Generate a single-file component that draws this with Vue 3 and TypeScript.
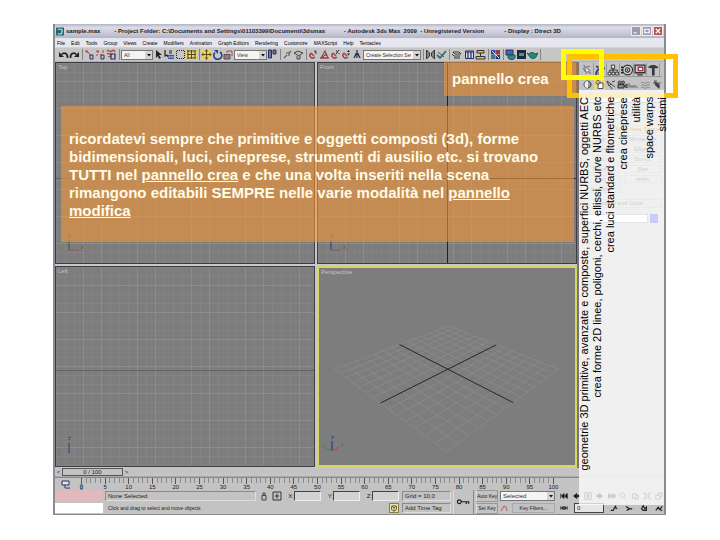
<script setup lang="ts">
interface Shape { d: string; fill?: string; stroke?: string; w?: number }
interface Tool { kind: 'btn' | 'sep' | 'gap' | 'select'; name?: string; on?: boolean; size?: string; shapes?: Shape[] }

const navy = '#26305e'
const dark = '#222'
const red = '#a8474a'

const btn = (name: string, shapes: Shape[], on = false): Tool => ({ kind: 'btn', name, shapes, on })
const sep: Tool = { kind: 'sep' }
const magnet: Shape = { d: 'M3 4C0 7 4 11 7 8M5 6l1 1M3 4l2 2', stroke: red, w: 1.6 }

const tools: Tool[] = [
  btn('Undo', [{ d: 'M9.500 9C10 4 6 3 3.500 5.500', stroke: dark, w: 1.7 }, { d: 'M1 3v5h5z', fill: dark }]),
  btn('Redo', [{ d: 'M1.500 9C1 4 5 3 7.500 5.500', stroke: dark, w: 1.7 }, { d: 'M10 3v5H5z', fill: dark }]),
  sep,
  btn('Link', [{ d: 'M1 2l3 1 3 4M3 1v3', stroke: red, w: 1 }, { d: 'M6 6h3v4H6z', stroke: navy, w: 1 }]),
  btn('Unlink', [{ d: 'M1 2l3 1M5 5l2 2M3 1v3M8 1v3M1 6h2', stroke: red, w: 1 }, { d: 'M6 6h3v4H6z', stroke: navy, w: 1 }]),
  btn('Bind to space warp', [{ d: 'M1 2c2-2 3 2 5 0s3 1 3 1M1 5c2-2 3 2 5 0M2 8l3-1', stroke: red, w: 1.3 }, { d: 'M5 5h4v5H5z', stroke: navy, w: 1.2 }]),
  sep,
  { kind: 'select', name: 'All', size: 'w-all' },
  btn('Select', [{ d: 'M3 1v8l2-2 1 3 2-1-2-3h3z', fill: dark }]),
  btn('Select by name', [{ d: 'M1 1v6l2-1 1 2M5 2h3M5 4h3', stroke: dark, w: 1.2 }, { d: 'M4 6h6v1.500H4zM4 8.500h6V10H4z', fill: '#3d54a0' }]),
  btn('Rectangular region', [{ d: 'M2 1.500h1M4 1.500h1M6 1.500h1M8 1.500h1M2 9.500h1M4 9.500h1M6 9.500h1M8 9.500h1M1.500 2v1M1.500 4v1M1.500 6v1M1.500 8v1M9.500 2v1M9.500 4v1M9.500 6v1M9.500 8v1', stroke: dark, w: 1 }]),
  btn('Window crossing', [{ d: 'M2 1v9M5.500 1v9M9 1v9M1 2h9M1 5.500h9M1 9h9', stroke: '#4d4a33', w: 1 }], true),
  sep,
  btn('Move', [{ d: 'M5.500 2v7M2 5.500h7', stroke: '#5a4a20', w: 1 }, { d: 'M5.500 0l2 2.500h-4zM5.500 11l2-2.500h-4zM0 5.500l2.500-2v4zM11 5.500l-2.500-2v4z', fill: '#7a5c14' }], true),
  btn('Rotate', [{ d: 'M3 3.500A4 4 0 1 0 8 3', stroke: '#27408b', w: 1.6 }, { d: 'M2 1h4v4z', fill: '#27408b' }]),
  btn('Scale', [{ d: 'M1 5.500h6V10H1z', fill: '#8d7c88', stroke: '#5d4a5a', w: 1 }, { d: 'M4 4V2h5v5', stroke: red, w: 1 }]),
  { kind: 'select', name: 'View', size: 'w-view' },
  btn('Pivot center', [{ d: 'M1.500 1h3v8h-3zM6 1h3v4H6z', fill: '#6a70a8', stroke: navy, w: 1 }]),
  sep,
  btn('Manipulate', [{ d: 'M2 9l3-3M4 4h3v3M7 4l2-2', stroke: '#56604a', w: 1.2 }]),
  btn('Keyboard shortcut override', [{ d: 'M1 4l4-2 5 2-4 3zM4 7v3h3V7', fill: '#bcbcbc', stroke: '#444', w: 1 }]),
  sep,
  btn('Snaps toggle', [magnet, { d: 'M6 2h2v1.500H7L8.500 5', stroke: dark, w: 0.8 }]),
  btn('Angle snap', [{ d: 'M1 9h9M2 9l4-7 3 7', stroke: red, w: 1.3 }, { d: 'M4 9a3 3 0 0 1 4-3', stroke: dark, w: 1 }]),
  btn('Percent snap', [magnet, { d: 'M6 5l3-4M6 2h1M8.500 4.500h1', stroke: dark, w: 1 }]),
  btn('Spinner snap', [magnet, { d: 'M6 3l1.500-2L9 3zM6 4.500h3L7.500 6.500z', fill: dark }]),
  btn('Named selection sets', [{ d: 'M5 1v4M3 5l4 0M2 9l2-4M5 9V5M8 9L6 5', stroke: navy, w: 1.3 }]),
  { kind: 'select', name: 'Create Selection Set', size: 'w-set' },
  sep,
  btn('Mirror', [{ d: 'M1.500 1v9l3-3V4zM9.500 1v9l-3-3V4z', fill: '#7a8a8a', stroke: '#333', w: 1 }]),
  btn('Align', [{ d: 'M1 6l3 3 6-7', stroke: '#2d7268', w: 1.8 }, { d: 'M2 3l6 5', stroke: '#355', w: 1 }]),
  sep,
  btn('Layer manager', [{ d: 'M2 3h6l2 2H4zM1 5l2 2h6M3 9h6', fill: '#e8e4d0', stroke: '#333', w: 1 }]),
  { kind: 'gap' },
  btn('Curve editor', [{ d: 'M1.500 2h8v7.500h-8z', fill: '#d5d8e4', stroke: navy, w: 1 }, { d: 'M1 3h9M4 3v7M7 3v7', stroke: navy, w: 1.2 }]),
  btn('Schematic view', [{ d: 'M2 1.500h7v2.500H2zM1 7.500h9V10H1z', fill: '#d9c256', stroke: '#333', w: 1 }, { d: 'M5.500 4v3.500', stroke: '#333', w: 1 }]),
  sep,
  btn('Material editor', [{ d: 'M1 1h4.500v4.500H1z', fill: '#2b469a' }, { d: 'M6 1h4v4.500H6z', fill: '#8e3d46' }, { d: 'M1 6h4.500v4H1z', fill: '#3c7c7c' }, { d: 'M6 6h4v4H6z', fill: '#27376e' }, { d: 'M2 2l7 7', stroke: '#e6e6f2', w: 1 }]),
  sep,
  btn('Render setup', [{ d: 'M1 1h7v5H1z', fill: '#4865b4', stroke: navy, w: 1 }, { d: 'M3 6h7v3l-2 1.500H5L3 9z', fill: '#2f8a80', stroke: '#164640', w: 0.8 }]),
  btn('Rendered frame', [{ d: 'M1 1h9v9H1z', fill: '#1f2a3a' }, { d: 'M3 4h5v3H3z', fill: '#3f9b92' }]),
  btn('Quick render', [{ d: 'M0 4l2 1c1-2 5-2 6 0l3-1-2 4c-1 2-5 2-6 0z', fill: '#2b857b', stroke: '#134640', w: 0.8 }]),
  sep,
]

const menus = ['File', 'Edit', 'Tools', 'Group', 'Views', 'Create', 'Modifiers', 'Animation', 'Graph Editors', 'Rendering', 'Customize', 'MAXScript', 'Help', 'Tentacles']

const tabs: { name: string; shapes: Shape[] }[] = [
  { name: 'Create', shapes: [{ d: 'M3 1l1 4 1 3 1-2 3 3M4 3l4-1M2 4l2 3', stroke: '#777', w: 1 }, { d: 'M3 2l5 4-3 2z', fill: '#fff', stroke: '#888', w: 1 }] },
  { name: 'Modify', shapes: [{ d: 'M2 10C2 5 5 4 9 2M5 10c0-4 2-6 5-6M2 2l2 1', stroke: '#345', w: 1.8 }] },
  { name: 'Hierarchy', shapes: [{ d: 'M4 1h3v3H4zM1 7.500h2.500V10H1zM4.500 7.500H7V10H4.500zM8 7.500h2.500V10H8z', fill: '#eee', stroke: dark, w: 0.8 }, { d: 'M5.500 4v3.500M2.500 7V5.500h7V7', stroke: dark, w: 0.8 }] },
  { name: 'Motion', shapes: [{ d: 'M6 1a4.500 4.500 0 1 0 .1 0zM6 3.500a2 2 0 1 0 .1 0z', fill: '#ccc', stroke: '#333', w: 1 }, { d: 'M5.500 5.500h1M0 3h2M0 5.500h2M0 8h2', stroke: dark, w: 1.2 }] },
  { name: 'Display', shapes: [{ d: 'M1 1h9v7H1zM3 10h5', fill: '#c8cce0', stroke: '#333', w: 1.2 }, { d: 'M4 3h4v3H4z', fill: '#fff', stroke: '#b03030', w: 1.2 }] },
  { name: 'Utilities', shapes: [{ d: 'M1 3.500C2 1 4 1 7 1l3 1.500V4H7v6.500H4.500V4z', fill: '#39393c' }] },
]

const categories: { name: string; shapes: Shape[]; on?: boolean }[] = [
  { name: 'Geometry', shapes: [{ d: 'M5.500 2a3.500 3.500 0 1 0 .1 0z', fill: '#999', stroke: '#333', w: 1 }, { d: 'M6 2a3.500 3.500 0 0 0 0 7z', fill: '#eee' }] },
  { name: 'Shapes', on: true, shapes: [{ d: 'M4 4h5v5.500H4z', fill: '#fff', stroke: '#555', w: 1 }, { d: 'M4 1.500a2 2 0 1 0 .1 0z', stroke: '#555', w: 1 }] },
  { name: 'Lights', shapes: [{ d: 'M2 2l4 3-2 2zM6 5l4 3M5 7l2 3M7 3l3-1', stroke: '#444', w: 1 }] },
  { name: 'Cameras', shapes: [{ d: 'M1 5.500h6V9H1zM7 7l3-2v4zM2.500 2a1.500 1.500 0 1 0 .1 0zM6 2a1.500 1.500 0 1 0 .1 0z', fill: '#888', stroke: '#333', w: 1 }] },
  { name: 'Helpers', shapes: [{ d: 'M1 4v4h9M3 8V6M5 8V6M7 8V6', stroke: '#777', w: 1.2 }] },
  { name: 'Space warps', shapes: [{ d: 'M1 4c2-2 3 1 5 0s3-1 4 0M1 6.500c2-2 3 1 5 0s3-1 4 0M1 9c2-2 3 1 5 0s3-1 4 0', stroke: '#888', w: 1 }] },
  { name: 'Systems', shapes: [{ d: 'M3 1l3 3 1-1 2 4-1 3-4-4z', fill: '#444' }, { d: 'M2 4h3M5 1v3M8 4h2', stroke: '#555', w: 1 }] },
]

const objectTypes = ['Line', 'Rectangle', 'Circle', 'Ellipse', 'Arc', 'Donut', 'NGon', 'Star', 'Text', 'Helix', 'Section']

const sideNotes = [
  'geometrie 3D primitive, avanzate e composte, superfici NURBS, oggetti AEC',
  'crea forme 2D linee, poligoni, cerchi, ellissi, curve NURBS etc',
  'crea luci standard e fltometriche',
  'crea cineprese',
  'utilità',
  'space warps',
  'sistemi',
]

const orthoViews = [
  { name: 'Top', id: 'top', ax: '50%', ay: '58%', strong: false, up: 'Y', upColor: '#2c6a38' },
  { name: 'Front', id: 'front', ax: '50%', ay: '58%', strong: true, up: 'Z', upColor: '#2c3a8c' },
  { name: 'Left', id: 'left', ax: '50%', ay: '52%', strong: false, up: 'Z', upColor: '#2c3a8c' },
]

/* Projective map of the unit square onto the ground plane's four corners. */
const [p0, p1, p2, p3] = [[15, 103], [131, 59], [243, 103], [129, 187]]
const dx1 = p1[0] - p2[0], dx2 = p3[0] - p2[0], dx3 = p0[0] - p1[0] + p2[0] - p3[0]
const dy1 = p1[1] - p2[1], dy2 = p3[1] - p2[1], dy3 = p0[1] - p1[1] + p2[1] - p3[1]
const det = dx1 * dy2 - dx2 * dy1
const g = (dx3 * dy2 - dx2 * dy3) / det
const h = (dx1 * dy3 - dx3 * dy1) / det
function project(u: number, v: number): string {
  const k = g * u + h * v + 1
  const x = ((p1[0] - p0[0] + g * p1[0]) * u + (p3[0] - p0[0] + h * p3[0]) * v + p0[0]) / k
  const y = ((p1[1] - p0[1] + g * p1[1]) * u + (p3[1] - p0[1] + h * p3[1]) * v + p0[1]) / k
  return `${x.toFixed(1)} ${y.toFixed(1)}`
}
const cells = 14
const floor = Array.from({ length: cells + 1 }, (_, i) => i / cells)
  .map(t => `M${project(t, 0)}L${project(t, 1)}M${project(0, t)}L${project(1, t)}`)
  .join('')
const floorAxes = `M${project(0.5, 0)}L${project(0.5, 1)}M${project(0, 0.5)}L${project(1, 0.5)}`

const frames = Array.from({ length: 101 }, (_, i) => i)
const marks = Array.from({ length: 21 }, (_, i) => i * 5)

const transport = [
  { name: 'Go to start', d: 'M1 2v6M5 2L2 5l3 3zM9 2L6 5l3 3z' },
  { name: 'Previous frame', d: 'M6 2L2 5l4 3zM7 4h2v2H7z' },
  { name: 'Play', d: 'M4 3l3 2-3 2zM1 1h8v8H1z' },
  { name: 'Next frame', d: 'M4 2l4 3-4 3zM1 4h2v2H1z' },
  { name: 'Go to end', d: 'M9 2v6M5 2l3 3-3 3zM1 2l3 3-3 3z' },
]
const zooms = ['M4 1a3 3 0 1 0 .1 0M6 6l3 3', 'M2 2h4v6H2zM6 4h3v5H5', 'M1 3V1h2M7 1h2v2M9 7v2H7M3 9H1V7M3 3h4v4H3z', 'M1 4h5v5H1zM4 4V1h5v5H6']
const navs = ['M1 8h3l2-4 3 2M7 2v3', 'M1 3l5 3-4 2M6 6h3', 'M2 6l2-4 2 4 2-2v4H4z', 'M1 8l3-4 2 3 3-4M7 8h2']
</script>

<template>
  <main class="slide">
    <section class="window">
      <header class="titlebar">
        <svg class="app-icon" viewBox="0 0 9 9"><rect width="9" height="9" fill="#1f6a74" /><path d="M2 2h4c2 1 1 3 0 3 2 1 0 3-4 2" fill="none" stroke="#bfe6ea" stroke-width="1.300" /></svg>
        <span class="t-file">sample.max</span>
        <span class="t-folder">- Project Folder: C:\Documents and Settings\01103399\Documenti\3dsmax</span>
        <span class="t-app">- Autodesk 3ds Max&nbsp; 2009&nbsp; - Unregistered Version</span>
        <span>- Display : Direct 3D</span>
        <div class="win-buttons">
          <button aria-label="Minimize"><svg viewBox="0 0 9 9"><path d="M2 6.500h3" /></svg></button>
          <button aria-label="Restore"><svg viewBox="0 0 9 9"><path d="M2 2.500h5v4H2z" /></svg></button>
          <button aria-label="Close" class="close"><svg viewBox="0 0 9 9"><path d="M2 2l5 5M7 2L2 7" /></svg></button>
        </div>
      </header>

      <nav class="menubar"><button v-for="m in menus" :key="m">{{ m }}</button></nav>

      <div class="toolbar">
        <template v-for="(t, i) in tools" :key="i">
          <span v-if="t.kind === 'sep'" class="sep"></span>
          <span v-else-if="t.kind === 'gap'" class="gap"></span>
          <span v-else-if="t.kind === 'select'" class="combo" :class="t.size">
            <select :aria-label="t.name"><option>{{ t.name }}</option></select>
            <svg class="drop" viewBox="0 0 7 8"><path d="M2 3h4L4 5.500z" /></svg>
          </span>
          <button v-else class="tool" :class="{ on: t.on }" :aria-label="t.name">
            <svg viewBox="0 0 11 11"><path v-for="(s, j) in t.shapes" :key="j" :d="s.d" :fill="s.fill || 'none'" :stroke="s.stroke || 'none'" :stroke-width="s.w" /></svg>
          </button>
        </template>
      </div>

      <div class="workspace">
        <div class="views">
          <div v-for="v in orthoViews" :key="v.id" class="view">
            <svg class="grid">
              <defs>
                <pattern :id="'fine-' + v.id" width="9" height="9" patternUnits="userSpaceOnUse"><path d="M0 .5h9M.5 0v9" stroke="#838383" fill="none" /></pattern>
                <pattern :id="'bold-' + v.id" width="54" height="54" patternUnits="userSpaceOnUse"><path d="M0 18.500h54M0 45.500h54M27.500 0v54M45.500 0v54" stroke="#8c8c8c" fill="none" /></pattern>
              </defs>
              <rect width="100%" height="100%" :fill="`url(#fine-${v.id})`" />
              <rect width="100%" height="100%" :fill="`url(#bold-${v.id})`" />
              <line x1="0" x2="100%" :y1="v.ay" :y2="v.ay" :stroke="v.strong ? '#303030' : '#666'" />
              <line v-if="v.strong" :x1="v.ax" :x2="v.ax" y1="0" y2="100%" stroke="#222" />
            </svg>
            <span class="view-name">{{ v.name }}</span>
            <svg class="axis" viewBox="0 0 30 22">
              <path d="M12 19V9" :stroke="v.upColor" /><path v-if="v.id !== 'left'" d="M12 19h9" stroke="#a05050" />
              <text x="11" y="6" :fill="v.upColor">{{ v.up.toLowerCase() }}</text>
              <text v-if="v.id !== 'left'" x="24" y="18" fill="#8c3c3c">x</text>
              <text v-else x="0" y="18" fill="#3c8c46">y</text>
            </svg>
          </div>
          <div class="view active">
            <svg class="floor" viewBox="0 0 259 201">
              <path :d="floor" stroke="#8f8f8f" stroke-width=".6" fill="none" />
              <path :d="floorAxes" stroke="#222" stroke-width="1" fill="none" />
            </svg>
            <span class="view-name">Perspective</span>
            <svg class="axis" viewBox="0 0 30 22">
              <path d="M12 18V8" stroke="#28288c" /><path d="M12 18l7-4" stroke="#b04848" /><path d="M12 18l-6-3" stroke="#3c8c46" />
              <text x="11" y="6" fill="#28288c">z</text><text x="21" y="13" fill="#b04848">x</text><text x="2" y="14" fill="#3c8c46">y</text>
            </svg>
          </div>
        </div>

        <aside class="panel">
          <div class="tabs">
            <button v-for="t in tabs" :key="t.name" :aria-label="t.name"><svg viewBox="0 0 11 11"><path v-for="(s, j) in t.shapes" :key="j" :d="s.d" :fill="s.fill || 'none'" :stroke="s.stroke || 'none'" :stroke-width="s.w" /></svg></button>
          </div>
          <div class="cats">
            <button v-for="t in categories" :key="t.name" :class="{ on: t.on }" :aria-label="t.name"><svg viewBox="0 0 11 11"><path v-for="(s, j) in t.shapes" :key="j" :d="s.d" :fill="s.fill || 'none'" :stroke="s.stroke || 'none'" :stroke-width="s.w" /></svg></button>
          </div>
          <div class="combo splines"><select aria-label="Splines"><option>Splines</option></select><svg class="drop" viewBox="0 0 7 8"><path d="M2 3h4L4 5.500z" /></svg></div>
          <h2>Object Type</h2>
          <div class="types">
            <button class="start">Start New Shape</button>
            <button v-for="o in objectTypes" :key="o">{{ o }}</button>
          </div>
          <h2>Name and Color</h2>
          <div class="naming"><input aria-label="Object name" /><button class="swatch" aria-label="Object color"></button></div>
        </aside>
      </div>

      <div class="timeslider">
        <button aria-label="Previous">&lt;</button><button class="thumb">0 / 100</button><button aria-label="Next">&gt;</button>
      </div>
      <div class="ruler">
        <svg class="track-icon" viewBox="0 0 10 9"><path d="M1 1h7v4H1zM4 5v3h5" fill="#dfe3f2" stroke="#26305e" /></svg>
        <div class="track">
          <div class="ticks"><i v-for="f in frames" :key="f"></i></div>
          <div class="marks"><span v-for="m in marks" :key="m"><b :class="{ now: m === 0 }">{{ m }}</b></span></div>
        </div>
      </div>

      <footer class="status">
        <div class="listener"><input class="pink" aria-label="Macro recorder" /><input aria-label="Listener" /></div>
        <div class="info">
          <div class="line">
            <output class="field picked">None Selected</output>
            <button class="mini" aria-label="Lock selection"><svg viewBox="0 0 10 10"><path d="M3 4.500h4V9H3zM4 4V2h2v2" fill="none" stroke="#444" /></svg></button>
            <button class="mini" aria-label="Absolute mode"><svg viewBox="0 0 10 10"><path d="M1 1h8v8H1zM5 2.500v5M3 5h4" fill="none" stroke="#333" /></svg></button>
            <label v-for="c in ['X', 'Y', 'Z']" :key="c">{{ c }}:<input /></label>
            <output class="field cell">Grid = 10,0</output>
          </div>
          <div class="line">
            <output class="prompt">Click and drag to select and move objects</output>
            <button class="tag-icon" aria-label="Time tag"><svg viewBox="0 0 10 10"><path d="M2 3l3-1 3 1v4L5 9 2 7zM2 3l3 1.500L8 3M5 4.500V9" fill="#fffbe0" stroke="#333" /></svg></button>
            <button class="field cell">Add Time Tag</button>
          </div>
        </div>
        <button class="key" aria-label="Set keys"><svg viewBox="0 0 16 8"><path d="M3.500 2a2 2 0 1 0 .1 0M6 4h8M11 4v2.500M13.500 4v2" fill="none" stroke="#222" stroke-width="1.300" /></svg></button>
        <div class="keys">
          <button>Auto Key</button>
          <div class="combo"><select aria-label="Key set"><option>Selected</option></select><svg class="drop" viewBox="0 0 7 8"><path d="M2 3h4L4 5.500z" /></svg></div>
          <button>Set Key</button>
          <div class="filters"><svg viewBox="0 0 10 10"><path d="M1 8l3-5 2 1 1 4" fill="none" stroke="#b05a5a" /></svg><button>Key Filters...</button></div>
        </div>
        <div class="play">
          <div class="line">
            <button v-for="t in transport" :key="t.name" :aria-label="t.name"><svg viewBox="0 0 10 10"><path :d="t.d" :fill="t.name === 'Play' ? 'none' : '#111'" stroke="#111" /></svg></button>
            <button v-for="(z, i) in zooms" :key="i" :aria-label="'Zoom ' + (i + 1)"><svg viewBox="0 0 10 10"><path :d="z" fill="none" stroke="#333" /></svg></button>
          </div>
          <div class="line">
            <button aria-label="Key mode"><svg viewBox="0 0 10 10"><path d="M1 3v4M9 3v4M4 3L2 5l2 2zM6 3l2 2-2 2z" fill="#111" stroke="#111" /></svg></button>
            <input aria-label="Current frame" value="0" />
            <button v-for="(n, i) in navs" :key="i" :aria-label="'View ' + (i + 1)"><svg viewBox="0 0 10 10"><path :d="n" fill="none" stroke="#222" stroke-width="1.500" /></svg></button>
          </div>
        </div>
      </footer>

      <p class="note label">pannello crea</p>
      <p class="note body">ricordatevi sempre che primitive e oggetti composti (3d), forme bidimensionali, luci, cineprese, strumenti di ausilio etc. si trovano TUTTI nel <u>pannello crea</u> e che una volta inseriti nella scena rimangono editabili SEMPRE nelle varie modalità nel <u>pannello modifica</u></p>
      <div class="frame amber"></div>
      <div class="veil"></div>
      <div class="frame yellow"></div>
      <div class="side-notes"><p v-for="s in sideNotes" :key="s">{{ s }}</p></div>
    </section>
  </main>
</template>

<style>
body { background: #fff; }
</style>

<style scoped>
* { box-sizing: border-box; margin: 0; }
.slide { display: flex; min-height: 100vh; padding: 24px 54px 25px 53px; font-family: "Liberation Sans", Arial, sans-serif; }
.window { position: relative; display: flex; flex: 1; flex-direction: column; min-width: 0; border: 1px solid #8b8b93; border-width: 0 2px 1px; background: #c3c3c4; color: #222; font-size: 6px; line-height: 8px; }
button, input, select { padding: 0; border: 0; border-radius: 0; background: none; color: inherit; font: inherit; appearance: none; }
svg { display: block; }

.titlebar { display: flex; align-items: center; height: 14px; padding: 0 1px; background: linear-gradient(#b4b4c4, #dcdce8 25%, #c6c6d6 70%, #b5b5c5); font-weight: bold; white-space: pre; }
.app-icon { width: 8px; height: 9px; margin-right: 2px; }
.t-file { margin-right: 14px; }
.t-folder { margin-right: 19px; }
.t-app { margin-right: 20px; }
.win-buttons { display: flex; gap: 1px; margin-left: auto; }
.win-buttons button { width: 10px; height: 10px; border: 1px solid #eee; background: #9c9cb8; }
.win-buttons .close { background: #c04d4d; }
.win-buttons path { fill: none; stroke: #fff; stroke-width: 1.300; }

.menubar { display: flex; gap: 6px; height: 10px; padding: 0 2px; background: #e6e6ef; border-bottom: 1px solid #d2d2da; color: #000; font-size: 5px; }
.toolbar { display: flex; align-items: center; height: 14px; padding: 0 3px; background: #c6c6c6; border-bottom: 1px solid #b2b2b2; }
.tool { flex: none; width: 11px; height: 11px; padding: 0; }
.tool.on { background: #ecd06a; }
.sep { flex: none; width: 1px; height: 11px; margin: 0 1px 0 2px; background: #858585; }
.gap { width: 2px; }
.combo { position: relative; display: flex; height: 10px; border: 1px solid #777; background: #f4f4f4; font-size: 5px; }
.combo select { flex: 1; min-width: 0; padding: 0 2px; color: #333; line-height: 8px; }
.drop { flex: none; width: 7px; height: 8px; background: #d4d4d4; fill: #111; pointer-events: none; }
.w-all { width: 32px; }
.w-view { width: 33px; }
.w-set { width: 58px; }

.workspace { display: flex; flex: 1; min-height: 0; }
.views { display: grid; flex: 1; grid-template: 1fr 1fr / 1fr 1fr; gap: 2px; min-width: 0; padding-bottom: 1px; background: #c8c8c8; }
.view { position: relative; overflow: hidden; border: 1px solid #3d3d48; background: #7d7d7d; }
.view.active { border: 2px solid #d6d65e; }
.grid, .floor { position: absolute; inset: 0; width: 100%; height: 100%; shape-rendering: crispEdges; }
.floor { shape-rendering: auto; }
.view-name { position: absolute; top: 0; left: 2px; color: #c4c4c4; }
.axis { position: absolute; bottom: 10px; left: 1px; width: 30px; height: 22px; font-size: 6px; }

.panel { flex: none; width: 87px; padding: 1px 2px 0; border-left: 2px solid #75757a; color: #333; }
.tabs, .cats { display: flex; justify-content: space-between; }
.tabs { padding: 0 2px 0 0; border-bottom: 1px solid #999; }
.tabs button { width: 13px; height: 13px; padding: 1px 0 0; border-right: 1px solid #999; }
.cats { padding: 2px 0 3px 1px; }
.cats button { width: 11px; height: 11px; padding: 0; }
.cats .on { background: #eed680; }
.splines { margin-bottom: 7px; }
.panel h2 { margin-bottom: 6px; border: 1px solid #aaa; font-size: 6px; font-weight: normal; line-height: 7px; text-align: center; }
.types { display: grid; grid-template-columns: 1fr 1fr; gap: 2px 4px; margin-bottom: 6px; }
.types button { height: 8px; border: 1px solid #aaa; line-height: 6px; }
.types .start { grid-column: 1 / 3; justify-self: end; width: 48px; background: #ecd06a; }
.naming { display: flex; gap: 2px; padding-right: 4px; }
.naming input { flex: 1; min-width: 0; height: 9px; border: 1px solid #999; background: #fff; }
.swatch { width: 8px; height: 9px; background: #2b35d8; }

.timeslider { display: flex; height: 9px; border-bottom: 1px solid #aaa; }
.timeslider button { width: 7px; height: 8px; }
.timeslider .thumb { width: 61px; border: 1px solid #555; line-height: 6px; }
.ruler { display: flex; height: 13px; margin-right: 84px; padding: 0 24px 0 6px; border-top: 1px solid #888; }
.track-icon { width: 10px; height: 9px; margin: 2px 8px 0 0; }
.track { flex: 1; min-width: 0; }
.ticks { display: flex; justify-content: space-between; height: 6px; padding: 0 2px; }
.ticks i { width: 1px; height: 5px; background: #8a8a8a; }
.ticks i:nth-child(5n + 1) { height: 6px; background: #555; }
.marks { display: flex; justify-content: space-between; padding: 0 2px; }
.marks span { display: flex; justify-content: center; width: 1px; line-height: 6px; }
.marks b { font-weight: normal; }
.marks .now { background: #7ba2b8; }

.status { display: flex; height: 24px; gap: 2px; }
.listener { display: grid; width: 48px; grid-template-rows: 1fr 1fr; gap: 2px; padding-bottom: 1px; }
.listener input { width: 100%; min-height: 0; background: #fff; }
.listener .pink { background: #dfb9bc; }
.info { display: flex; flex: 1; flex-direction: column; gap: 1px; min-width: 0; }
.line { display: flex; flex: 1; align-items: center; min-height: 0; white-space: nowrap; }
.info .line { gap: 3px; }
.field { height: 10px; padding: 0 2px; border: 1px solid; border-color: #8a8a8a #ddd #ddd #8a8a8a; text-align: left; }
.picked { flex: 1; min-width: 0; }
.cell { width: 49px; }
.mini { width: 10px; height: 10px; }
.line label { display: flex; align-items: center; justify-content: flex-end; width: 36px; }
.line label input { width: 27px; height: 10px; border: 1px solid; border-color: #444 #eee #eee #444; background: #d2d2d2; }
.prompt { flex: 1; padding-left: 3px; font-size: 5px; }
.tag-icon { width: 10px; height: 10px; background: #f0e49c; border: 1px solid #8a8040; }
.key { width: 21px; padding: 0 2px; border-right: 1px solid #888; border-left: 1px solid #ddd; }
.keys { display: grid; width: 79px; grid-template: 1fr 1fr / 22px 1fr; gap: 1px 2px; }
.keys > button { border: 1px solid #999; border-left-color: #ddd; font-size: 5px; white-space: nowrap; }
.keys .combo { align-self: center; height: 10px; font-size: 6px; }
.filters { display: flex; align-items: center; gap: 2px; }
.filters svg { width: 10px; height: 10px; }
.filters button { flex: 1; border: 1px solid #aaa; font-size: 5px; }
.play { display: flex; flex-direction: column; width: 107px; padding-left: 2px; }
.play .line { justify-content: space-between; }
.play button { width: 10px; height: 10px; padding: 1px; }
.play input { width: 30px; height: 10px; padding: 0 2px; border: 1px solid #444; background: #e6e6e6; }

.note { position: absolute; background: rgba(243, 150, 53, .6); color: #fffbe8; font-size: 15px; font-weight: bold; line-height: 18px; }
.label { top: 37px; right: 87px; left: 389px; height: 35px; padding: 9px 8px; }
.body { top: 82px; right: 90px; left: 6px; padding: 24px 8px 22px; }
.frame { position: absolute; border: 5px solid #ffc000; }
.amber { top: 30px; right: -14px; width: 111px; height: 44px; }
.yellow { top: 25px; right: 60px; width: 43px; height: 31px; border-color: #ff0; }
.veil { position: absolute; top: 66px; right: 0; bottom: 9px; width: 85px; background: rgba(255, 255, 255, .75); }
.side-notes { position: absolute; top: 73px; right: -5px; color: #000; font-size: 11px; line-height: 13px; text-align: right; white-space: nowrap; writing-mode: vertical-rl; transform: rotate(180deg); }
</style>
